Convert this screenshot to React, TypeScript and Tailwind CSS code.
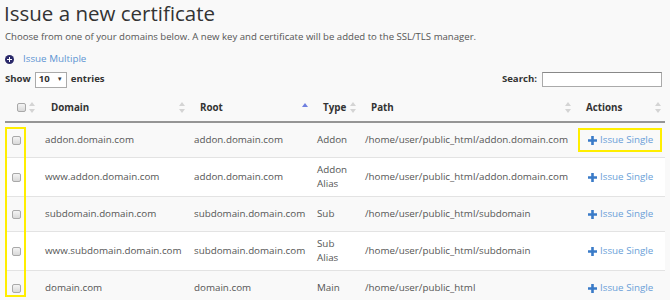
import React from 'react';

const rows = [
  { domain: 'addon.domain.com', root: 'addon.domain.com', type: ['Addon'], path: '/home/user/public_html/addon.domain.com' },
  { domain: 'www.addon.domain.com', root: 'addon.domain.com', type: ['Addon', 'Alias'], path: '/home/user/public_html/addon.domain.com' },
  { domain: 'subdomain.domain.com', root: 'subdomain.domain.com', type: ['Sub'], path: '/home/user/public_html/subdomain' },
  { domain: 'www.subdomain.domain.com', root: 'subdomain.domain.com', type: ['Sub', 'Alias'], path: '/home/user/public_html/subdomain' },
  { domain: 'domain.com', root: 'domain.com', type: ['Main'], path: '/home/user/public_html' },
];

const SortBoth = () => (
  <svg width="6" height="11" viewBox="0 0 6 11" className="shrink-0">
    <path d="M3 0 L6 4 L0 4 Z" fill="#d4d4d4" />
    <path d="M3 11 L6 7 L0 7 Z" fill="#d4d4d4" />
  </svg>
);

const SortAsc = () => (
  <svg width="6" height="11" viewBox="0 0 6 11" className="shrink-0">
    <path d="M3 1 L6 5 L0 5 Z" fill="#6f7fe0" />
  </svg>
);

const Checkbox = () => (
  <span className="inline-block w-[9px] h-[9px] rounded-[2px] border border-[#a9a9a9] bg-gradient-to-b from-[#f4f4f4] to-[#d9d9d9]" />
);

const PlusIcon = () => (
  <svg width="9" height="9" viewBox="0 0 9 9" className="shrink-0">
    <path d="M3.2 0 H5.8 V3.2 H9 V5.8 H5.8 V9 H3.2 V5.8 H0 V3.2 H3.2 Z" fill="#3a7bc8" />
  </svg>
);

const headers = [
  { label: 'Domain', icon: <SortBoth /> },
  { label: 'Root', icon: <SortAsc /> },
  { label: 'Type', icon: <SortBoth /> },
  { label: 'Path', icon: <SortBoth /> },
  { label: 'Actions', icon: <SortBoth /> },
];

export default function App() {
  return (
    <div className="relative w-[670px] h-[300px] overflow-hidden bg-[#f9f9f9] text-[#555] font-['Open_Sans',sans-serif]">
      <h1 className="pl-[4px] pt-[1px] text-[20.5px] leading-[25px] text-[#333]">Issue a new certificate</h1>
      <p className="pl-[5px] mt-[4px] text-[9.6px] leading-[14px]">
        Choose from one of your domains below. A new key and certificate will be added to the SSL/TLS manager.
      </p>

      {/* Issue multiple */}
      <div className="flex items-center pl-[5px] mt-[8px] h-[14px]">
        <span className="w-[9px] h-[9px] rounded-full bg-[#2b2a6b] flex items-center justify-center">
          <svg width="5" height="5" viewBox="0 0 5 5">
            <path d="M2 0 H3 V2 H5 V3 H3 V5 H2 V3 H0 V2 H2 Z" fill="#fff" />
          </svg>
        </span>
        <span className="ml-[9px] text-[9.8px] text-[#5d95d3]">Issue Multiple</span>
      </div>

      {/* Length + search */}
      <div className="flex items-center justify-between pl-[5px] pr-[8px] mt-[5px] h-[17px]">
        <div className="flex items-center text-[9.6px] font-bold text-[#333]">
          <span>Show</span>
          <span className="ml-[4px] w-[32px] h-[16px] border border-[#aaa] bg-white flex items-center justify-between px-[3px] font-bold">
            <span>10</span>
            <span className="text-[6px]">▼</span>
          </span>
          <span className="ml-[4px]">entries</span>
        </div>
        <div className="flex items-center text-[9.6px] font-bold text-[#333]">
          <span>Search:</span>
          <span className="ml-[5px] w-[120px] h-[15px] border border-[#aaa] border-t-[#888] bg-white" />
        </div>
      </div>

      <table className="mt-[6px] ml-[5px] w-[660px] table-fixed border-collapse text-[9.8px] leading-[14px]">
        <colgroup>
          <col className="w-[35px]" />
          <col className="w-[149px]" />
          <col className="w-[123px]" />
          <col className="w-[48px]" />
          <col className="w-[215px]" />
          <col className="w-[90px]" />
        </colgroup>
        <thead>
          <tr className="border-b-2 border-[#959595] h-[28px]">
            <th className="pl-[12px] pr-[2px]">
              <div className="flex items-center gap-[3px]">
                <Checkbox />
                <SortBoth />
              </div>
            </th>
            {headers.map((h) => (
              <th key={h.label} className="pl-[11px] pr-[4px] text-left font-bold text-[#333]">
                <div className="flex items-center justify-between">
                  <span>{h.label}</span>
                  {h.icon}
                </div>
              </th>
            ))}
          </tr>
        </thead>
        <tbody>
          {rows.map((r, i) => (
            <tr key={r.domain} className={`border-b border-[#e3e3e3] ${i % 2 === 0 ? 'bg-[#f9f9f9]' : 'bg-white'}`}>
              <td className="pl-[7px] py-[5px] align-middle">
                <div className="flex items-center">
                  <Checkbox />
                </div>
              </td>
              <td className="pl-[5px] py-[5px]">{r.domain}</td>
              <td className="pl-[5px] py-[5px]">{r.root}</td>
              <td className="pl-[5px] py-[5px]">
                {r.type.map((t) => (
                  <div key={t}>{t}</div>
                ))}
              </td>
              <td className="pl-[5px] py-[5px] whitespace-nowrap">{r.path}</td>
              <td className="pl-[13px] py-[5px]">
                <div className="flex items-center h-[24px] gap-[3px] text-[#6a9fd8]">
                  <PlusIcon />
                  <span>Issue Single</span>
                </div>
              </td>
            </tr>
          ))}
        </tbody>
      </table>

      {/* annotation highlights */}
      <div className="absolute left-[5px] top-[127px] w-[21px] h-[170px] border-2 border-[#ffee00]" />
      <div className="absolute left-[578px] top-[128px] w-[84px] h-[24px] border-2 border-[#ffee00]" />
    </div>
  );
}
